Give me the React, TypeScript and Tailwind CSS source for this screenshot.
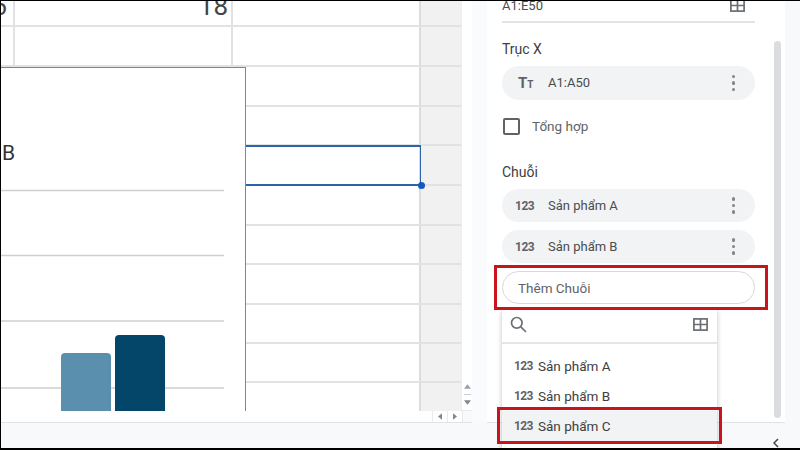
const rows = [26, 40, 40, 39, 40, 40, 39, 40, 39, 39, 40];

const GridIcon = ({ className }: { className: string }) => (
  <svg viewBox="0 0 15 13" className={className} fill="none" stroke="#6b6f73" strokeWidth="1.7">
    <rect x="0.9" y="0.9" width="13.2" height="11.2" />
    <path d="M7.5 1V12M1 6.5H14" />
  </svg>
);

const Dots = () => (
  <div className="flex flex-col gap-[3px] mr-[20px]">
    <div className="w-[3.5px] h-[3.5px] rounded-full bg-[#80868b]" />
    <div className="w-[3.5px] h-[3.5px] rounded-full bg-[#80868b]" />
    <div className="w-[3.5px] h-[3.5px] rounded-full bg-[#80868b]" />
  </div>
);

const Pill = ({ icon, label }: { icon: string; label: string }) => (
  <div className="flex items-center h-[33px] rounded-full bg-[#f1f3f4]">
    <span className="w-[46px] pl-[13px] pt-px text-[12px] font-bold tracking-[-0.5px] text-[#5f6368] shrink-0">{icon}</span>
    <span className="flex-1 pt-px text-[13px] text-[#4a4d50]">{label}</span>
    <Dots />
  </div>
);

const DropItem = ({ label }: { label: string }) => (
  <div className="flex items-center h-[30px] pl-[12px]">
    <span className="w-[24px] text-[12px] font-bold tracking-[-0.6px] text-[#5f6368]">123</span>
    <span className="text-[13.5px] text-[#3c4043]">{label}</span>
  </div>
);

export default function App() {
  return (
    <div className="relative w-[800px] h-[450px] overflow-hidden bg-[#f8f9fa] flex flex-col border-t border-l border-black border-b-2 font-['Roboto',sans-serif]">
      <div className="flex h-[422px]">
        {/* sheet */}
        <div className="w-[471px] shrink-0 flex flex-col border-b border-[#e0e3e6]">
          <div className="flex flex-1 min-h-0">
            <div className="relative w-[460px] h-[410px] overflow-hidden bg-white">
              {rows.map((h, i) => (
                <div key={i} className="flex border-b-2 border-[#e2e2e2] box-border" style={{ height: h }}>
                  <div className="w-[14px] border-r-2 border-[#e2e2e2] relative overflow-hidden">
                    {i === 0 && <span className="absolute right-[6px] -top-[11px] text-[26px] text-[#444] leading-[32px]">6</span>}
                  </div>
                  <div className="w-[218px] border-r-2 border-[#e2e2e2] relative overflow-hidden">
                    {i === 0 && <span className="absolute right-[3px] -top-[11px] text-[26px] text-[#444] leading-[32px]">18</span>}
                  </div>
                  <div className="w-[188px] border-r-2 border-[#dcdcdc]" />
                  <div className="flex-1 bg-[#f1f1f1]" />
                </div>
              ))}
              {/* chart floating on the sheet */}
              <div className="absolute left-[-1px] top-[66px] w-[246px] h-[350px] bg-white border-t border-r border-[#858585]">
                <span className="absolute left-[2px] top-[70px] text-[21px] leading-[30px] text-[#333]">B</span>
                <svg viewBox="0 0 245 350" className="w-[245px] h-[350px]">
                  <path d="M0 122.500H224M0 187.500H224M0 253H224M0 320H224" stroke="#cfcfcf" strokeWidth="1.500" fill="none" />
                  <path d="M61 350V289a4 4 0 0 1 4-4H107a4 4 0 0 1 4 4V350Z" fill="#5b8fae" />
                  <path d="M115 350V271a4 4 0 0 1 4-4H161a4 4 0 0 1 4 4V350Z" fill="#03466a" />
                </svg>
              </div>
              {/* selected cell */}
              <div className="absolute left-[245px] top-[144px] w-[175px] h-[41px] border-t-2 border-b-2 border-r border-[#2a64ad]" />
              <div className="absolute left-[417px] top-[181px] w-[7px] h-[7px] rounded-full bg-[#1259bd]" />
            </div>
            <div className="w-[11px] bg-white flex flex-col justify-end items-center pb-[5px] gap-[5px] border-l border-[#eceef0]">
              <svg viewBox="0 0 8 5" className="w-[7px] h-[5px]"><path d="M4 0L8 5H0Z" fill="#9aa0a6" /></svg>
              <div className="w-[7px] h-px bg-[#c5cfe0]" />
              <svg viewBox="0 0 8 5" className="w-[7px] h-[5px]"><path d="M4 5L8 0H0Z" fill="#80868b" /></svg>
            </div>
          </div>
          <div className="h-[12px] bg-white border-t border-[#e8eaed] flex justify-end">
            <div className="w-[15px] border-l border-[#e8eaed] flex items-center justify-center">
              <svg viewBox="0 0 5 8" className="w-[4px] h-[7px]"><path d="M0 4L5 0V8Z" fill="#80868b" /></svg>
            </div>
            <div className="w-[15px] border-l border-[#e8eaed] flex items-center justify-center">
              <svg viewBox="0 0 5 8" className="w-[4px] h-[7px]"><path d="M5 4L0 0V8Z" fill="#80868b" /></svg>
            </div>
            <div className="w-[10px] border-l border-[#e8eaed] bg-[#f8f9fa]" />
          </div>
        </div>
        <div className="w-[15px] shrink-0 bg-[#fafbfc]" />

        {/* side panel */}
        <div className="w-[298px] shrink-0 bg-white flex border-b border-[#e0e3e6]">
          <div className="w-[268px] pl-[15px] shrink-0">
            <div className="w-[253px]">
              <div className="h-[22px] flex items-end justify-between border-b-2 border-[#e3e4e6] pb-[8px] pr-[10px]">
                <span className="text-[13px] leading-[14px] text-[#4a4d50]">A1:E50</span>
                <GridIcon className="w-[15px] h-[13px] mb-px" />
              </div>
              <div className="mt-[18px] text-[14px] leading-[16px] text-[#3c4043]">Trục X</div>
              <div className="mt-[9px] flex items-center h-[34px] rounded-full bg-[#f1f3f4]">
                <span className="w-[46px] pl-[16px] text-[#5f6368] font-bold shrink-0 leading-none">
                  <span className="text-[15px]">T</span>
                  <span className="text-[10px]">T</span>
                </span>
                <span className="flex-1 text-[13px] text-[#4a4d50]">A1:A50</span>
                <Dots />
              </div>
              <div className="mt-[18px] flex items-center h-[17px]">
                <div className="w-[17px] h-[17px] ml-px rounded-[2px] border-2 border-[#5f6368]" />
                <span className="ml-[12px] text-[13.5px] text-[#5f6368]">Tổng hợp</span>
              </div>
              <div className="mt-[29px] text-[14px] leading-[16px] text-[#3c4043]">Chuỗi</div>
              <div className="mt-[9px] flex flex-col gap-[8px]">
                <Pill icon="123" label="Sản phẩm A" />
                <Pill icon="123" label="Sản phẩm B" />
              </div>
              <div className="mt-[8px] h-[33px] rounded-full border border-[#d7d9dc] bg-white flex items-center pl-[15px] pt-px text-[13.5px] text-[#5f6368]">
                Thêm Chuỗi
              </div>
            </div>
          </div>
          <div className="ml-[19px] mt-[40px] w-[7px] h-[377px] rounded-full bg-[#dadce0]" />
        </div>
        <div className="flex-1 bg-[#f8f9fa]" />
      </div>

      {/* bottom bar */}
      <div className="flex-1 flex justify-end items-center pr-[21px] pt-[15px]">
        <svg viewBox="0 0 6 10" className="w-[6px] h-[10px]" fill="none" stroke="#444" strokeWidth="1.500"><path d="M5 1L1 5L5 9" /></svg>
      </div>

      {/* dropdown over the panel */}
      <div className="absolute left-[501px] top-[309px] w-[215px] h-[140px] bg-white shadow-[0_1px_5px_rgba(0,0,0,0.25)]">
        <div className="h-[34px] flex items-center justify-between pl-[8px] pr-[9px] pb-[4px] border-b-2 border-[#e4e5e7]">
          <svg viewBox="0 0 17 17" className="w-[17px] h-[17px]" fill="none" stroke="#6b6f73" strokeWidth="1.700">
            <circle cx="6.800" cy="6.800" r="5.300" />
            <path d="M10.800 10.800L16 16" />
          </svg>
          <GridIcon className="w-[15px] h-[13px]" />
        </div>
        <div className="pt-[7px]">
          <DropItem label="Sản phẩm A" />
          <DropItem label="Sản phẩm B" />
          <div className="bg-[#f1f3f4]">
            <DropItem label="Sản phẩm C" />
          </div>
        </div>
      </div>

      {/* red annotation boxes */}
      <div className="absolute left-[493px] top-[264px] w-[274px] h-[45px] border-[3px] border-[#c8141c]" />
      <div className="absolute left-[496px] top-[406px] w-[225px] h-[37px] border-[3px] border-[#c8141c]" />
    </div>
  );
}
